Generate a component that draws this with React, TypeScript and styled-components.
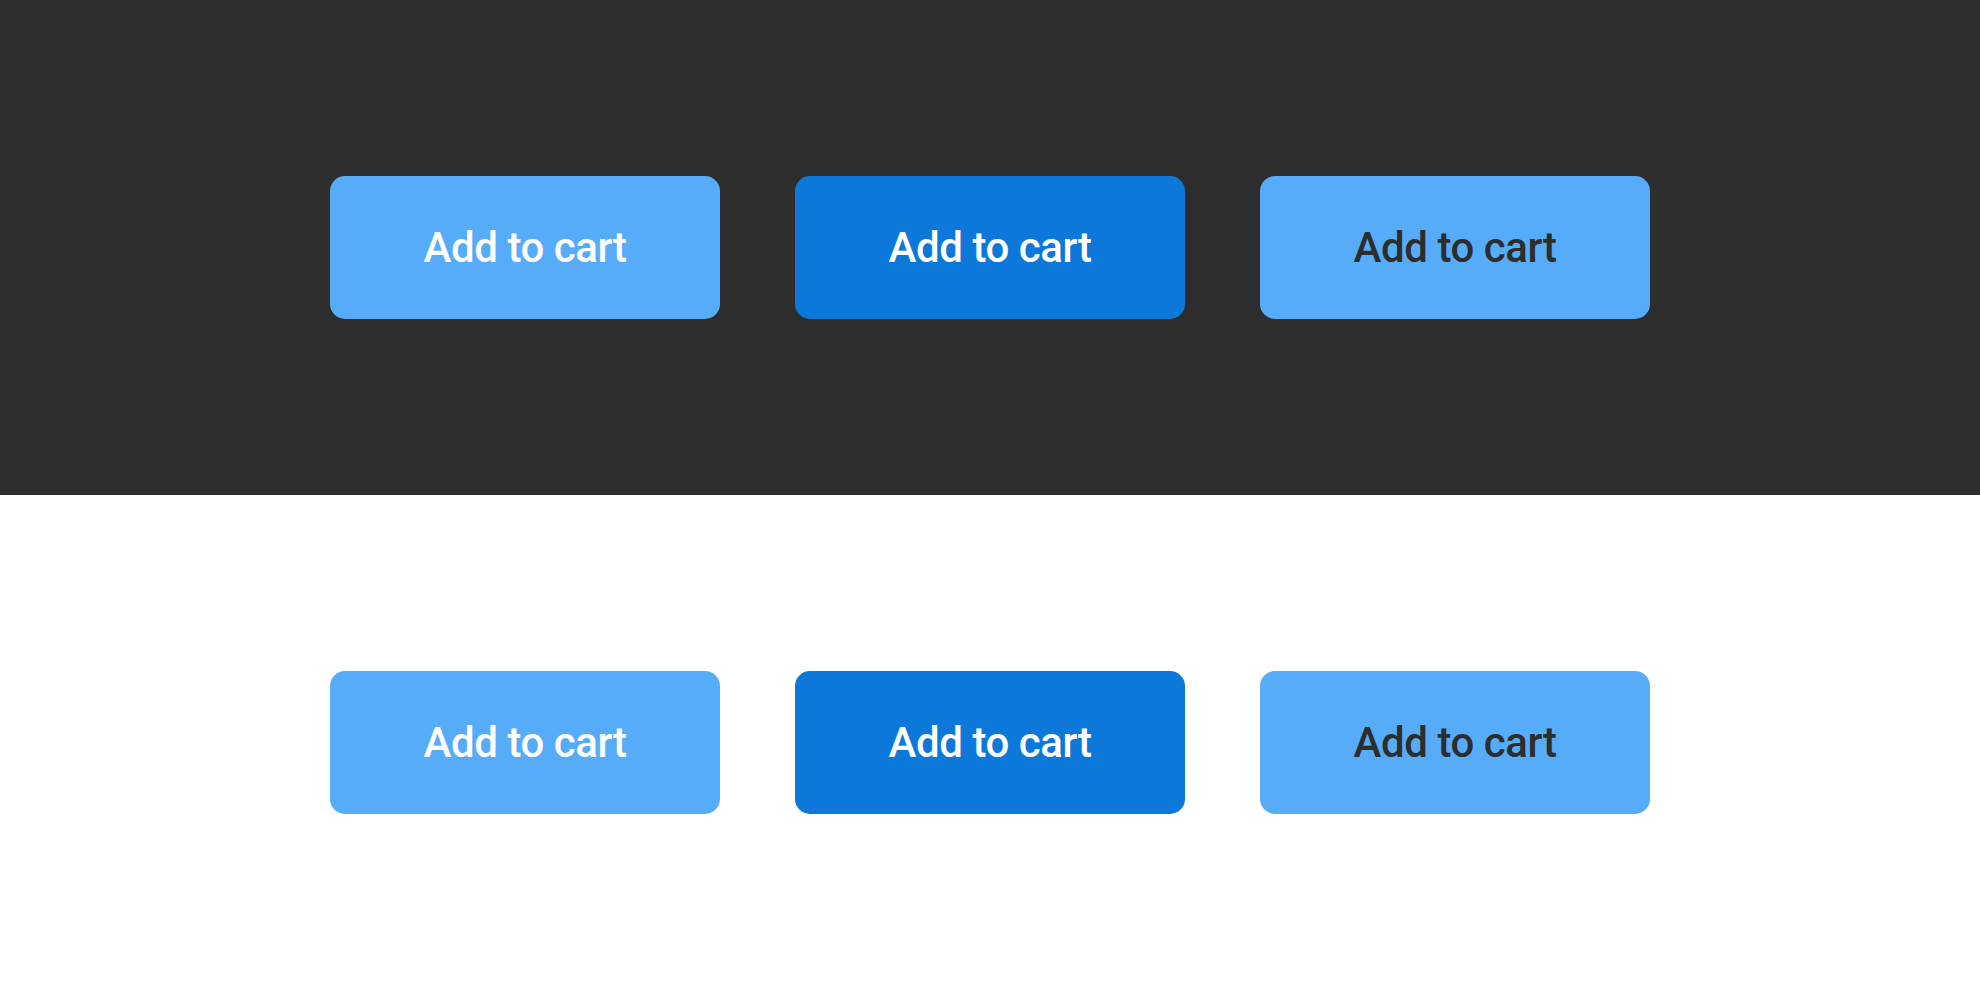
import React from "react";
import styled, { createGlobalStyle } from "styled-components";

const GlobalStyle = createGlobalStyle`
  html, body { margin: 0; padding: 0; }
  body { font-family: Roboto, "Liberation Sans", sans-serif; }
`;

const Page = styled.div`
  display: flex;
  flex-direction: column;
  width: 100%;
`;

const Section = styled.section<{ $dark?: boolean }>`
  height: 495px;
  background: ${(p) => (p.$dark ? "#2d2d2d" : "#ffffff")};
  display: flex;
  align-items: center;
  justify-content: center;
`;

const Row = styled.div`
  display: flex;
  gap: 75px;
`;

type Variant = "light" | "dark" | "lightDarkText";

const CartButton = styled.button<{ $variant: Variant }>`
  width: 390px;
  height: 143px;
  border: none;
  border-radius: 15px;
  font-family: Roboto, "Liberation Sans", sans-serif;
  font-size: 42px;
  font-weight: 500;
  letter-spacing: -0.45px;
  padding: 0;
  cursor: pointer;
  background: ${(p) => (p.$variant === "dark" ? "#0c78d9" : "#56acf8")};
  color: ${(p) => (p.$variant === "lightDarkText" ? "#2d2d2d" : "#ffffff")};
`;

const ButtonRow = () => (
  <Row>
    <CartButton $variant="light">Add to cart</CartButton>
    <CartButton $variant="dark">Add to cart</CartButton>
    <CartButton $variant="lightDarkText">Add to cart</CartButton>
  </Row>
);

export default function App() {
  return (
    <>
      <GlobalStyle />
      <Page>
        <Section $dark>
          <ButtonRow />
        </Section>
        <Section>
          <ButtonRow />
        </Section>
      </Page>
    </>
  );
}
